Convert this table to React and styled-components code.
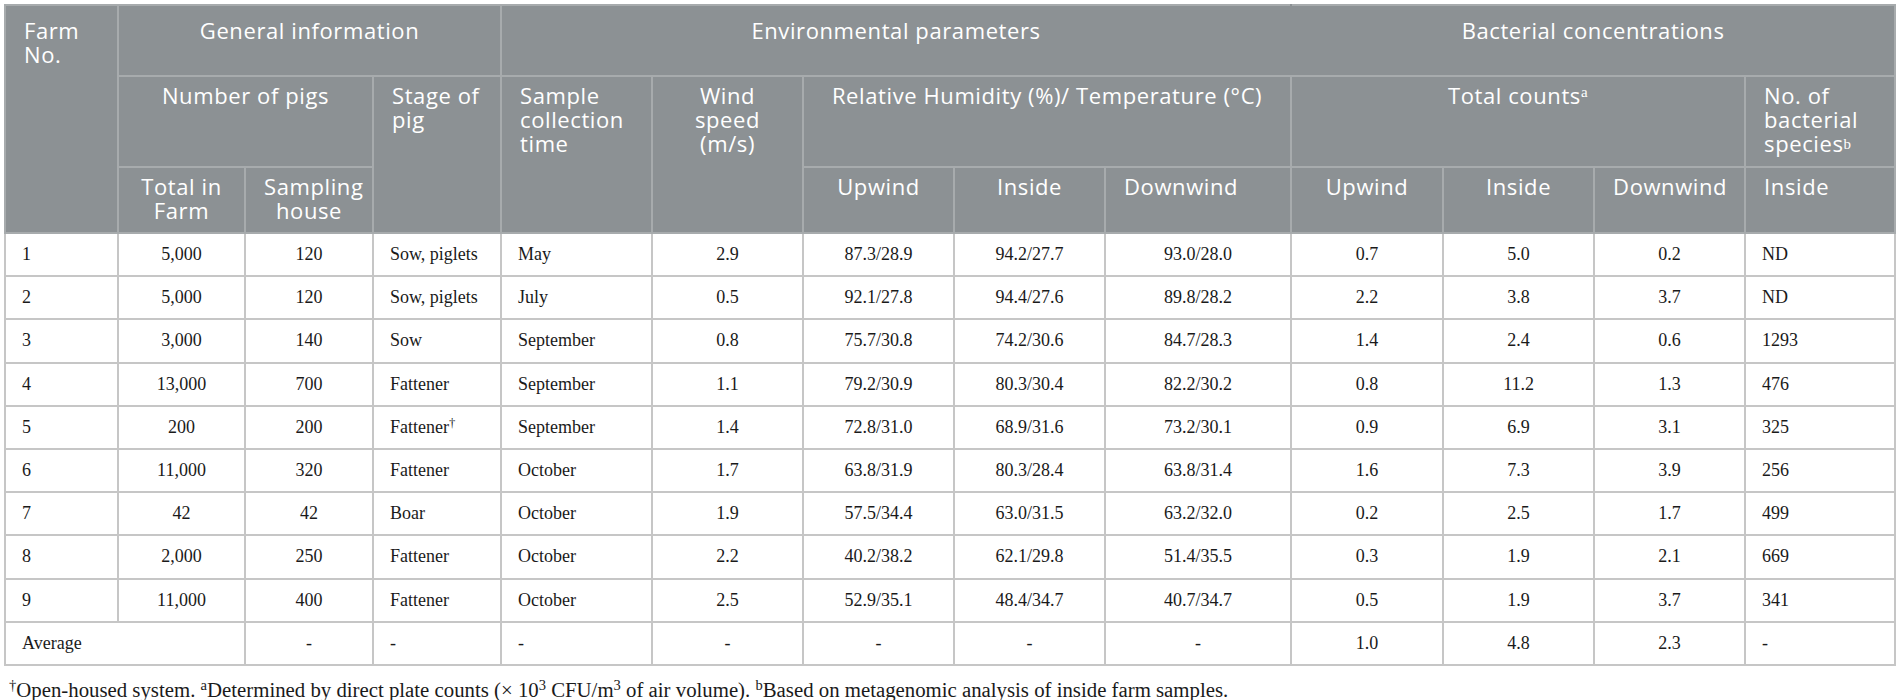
import styled, { createGlobalStyle } from "styled-components";

const GlobalStyle = createGlobalStyle`
  html, body {
    margin: 0;
    background: #fff;
  }
`;

const Page = styled.div`
  padding: 4px 0 0 4px;
`;

const Table = styled.table`
  width: 1890px;
  table-layout: fixed;
  border-collapse: collapse;
  border: 2px solid #b4b4b4;
`;

const HeadRow = styled.tr`
  height: ${(p) => p.$h}px;
`;

const BodyRow = styled.tr`
  height: 43.2px;
`;

const Th = styled.th`
  background: #8c9194;
  color: #fff;
  font-family: "Open Sans", "Noto Sans", sans-serif;
  font-weight: 400;
  font-size: 22px;
  line-height: 24px;
  letter-spacing: 0.6px;
  text-align: ${(p) => p.$align || "center"};
  vertical-align: top;
  padding: ${(p) => p.$pt ?? 6}px 18px 0;
  border: 2px solid #a7abad;
  ${(p) => p.$openRight && "border-right-color: #8c9194;"}
`;

const Td = styled.td`
  font-family: "Liberation Serif", "Times New Roman", serif;
  font-size: 18px;
  color: #1a1a1a;
  text-align: ${(p) => p.$align || "center"};
  vertical-align: middle;
  padding: 0 16px;
  border: 2px solid #c6c6c6;
  white-space: nowrap;
`;

const Sup = styled.sup`
  font-family: "Liberation Serif", "Times New Roman", serif;
  font-size: ${(p) => p.$size || 0.62}em;
  line-height: 0;
  vertical-align: ${(p) => p.$raise || 0.5}em;
`;

const Footnote = styled.p`
  margin: 14px 0 0 5px;
  font-family: "Liberation Serif", "Times New Roman", serif;
  font-size: 20.8px;
  line-height: 20px;
  color: #1a1a1a;
  white-space: nowrap;
`;

const widths = [113, 127, 128, 128, 151, 151, 151, 151, 186, 152, 151, 151, 150];
const aligns = ["left", "center", "center", "left", "left", "center", "center", "center", "center", "center", "center", "center", "left"];

const rows = [
  ["1", "5,000", "120", "Sow, piglets", "May", "2.9", "87.3/28.9", "94.2/27.7", "93.0/28.0", "0.7", "5.0", "0.2", "ND"],
  ["2", "5,000", "120", "Sow, piglets", "July", "0.5", "92.1/27.8", "94.4/27.6", "89.8/28.2", "2.2", "3.8", "3.7", "ND"],
  ["3", "3,000", "140", "Sow", "September", "0.8", "75.7/30.8", "74.2/30.6", "84.7/28.3", "1.4", "2.4", "0.6", "1293"],
  ["4", "13,000", "700", "Fattener", "September", "1.1", "79.2/30.9", "80.3/30.4", "82.2/30.2", "0.8", "11.2", "1.3", "476"],
  ["5", "200", "200", { text: "Fattener", sup: "†" }, "September", "1.4", "72.8/31.0", "68.9/31.6", "73.2/30.1", "0.9", "6.9", "3.1", "325"],
  ["6", "11,000", "320", "Fattener", "October", "1.7", "63.8/31.9", "80.3/28.4", "63.8/31.4", "1.6", "7.3", "3.9", "256"],
  ["7", "42", "42", "Boar", "October", "1.9", "57.5/34.4", "63.0/31.5", "63.2/32.0", "0.2", "2.5", "1.7", "499"],
  ["8", "2,000", "250", "Fattener", "October", "2.2", "40.2/38.2", "62.1/29.8", "51.4/35.5", "0.3", "1.9", "2.1", "669"],
  ["9", "11,000", "400", "Fattener", "October", "2.5", "52.9/35.1", "48.4/34.7", "40.7/34.7", "0.5", "1.9", "3.7", "341"],
];

const average = ["-", "-", "-", "-", "-", "-", "-", "1.0", "4.8", "2.3", "-"];

const Cell = ({ value, align }) => (
  <Td $align={align}>
    {typeof value === "object" ? (
      <>
        {value.text}
        <Sup $size={0.7}>{value.sup}</Sup>
      </>
    ) : (
      value
    )}
  </Td>
);

export default function App() {
  return (
    <Page>
      <GlobalStyle />
      <Table>
        <colgroup>
          {widths.map((w, i) => (
            <col key={i} style={{ width: w }} />
          ))}
        </colgroup>
        <thead>
          <HeadRow $h={71}>
            <Th rowSpan={3} $align="left" $pt={12}>Farm No.</Th>
            <Th colSpan={3} $pt={12}>General information</Th>
            <Th colSpan={5} $pt={12} $openRight>Environmental parameters</Th>
            <Th colSpan={4} $pt={12}>Bacterial concentrations</Th>
          </HeadRow>
          <HeadRow $h={91}>
            <Th colSpan={2}>Number of pigs</Th>
            <Th rowSpan={2} $align="left">Stage of pig</Th>
            <Th rowSpan={2} $align="left">Sample collection time</Th>
            <Th rowSpan={2}>Wind speed (m/s)</Th>
            <Th colSpan={3}>Relative Humidity (%)/ Temperature (°C)</Th>
            <Th colSpan={3}>
              Total counts<Sup $size={0.68} $raise={0.45}>a</Sup>
            </Th>
            <Th $align="left">
              No. of bacterial species<Sup $size={0.68} $raise={0.2}>b</Sup>
            </Th>
          </HeadRow>
          <HeadRow $h={66}>
            <Th>Total in Farm</Th>
            <Th>Sampling house</Th>
            <Th>Upwind</Th>
            <Th>Inside</Th>
            <Th $align="left">Downwind</Th>
            <Th>Upwind</Th>
            <Th>Inside</Th>
            <Th>Downwind</Th>
            <Th $align="left">Inside</Th>
          </HeadRow>
        </thead>
        <tbody>
          {rows.map((r) => (
            <BodyRow key={r[0]}>
              {r.map((v, i) => (
                <Cell key={i} value={v} align={aligns[i]} />
              ))}
            </BodyRow>
          ))}
          <BodyRow>
            <Td colSpan={2} $align="left">Average</Td>
            {average.map((v, i) => (
              <Cell key={i} value={v} align={aligns[i + 2]} />
            ))}
          </BodyRow>
        </tbody>
      </Table>
      <Footnote>
        <Sup $size={0.7}>†</Sup>Open-housed system. <Sup $size={0.7}>a</Sup>Determined by direct plate counts (× 10
        <Sup $size={0.7}>3</Sup> CFU/m<Sup $size={0.7}>3</Sup> of air volume). <Sup $size={0.7}>b</Sup>Based on
        metagenomic analysis of inside farm samples.
      </Footnote>
    </Page>
  );
}
